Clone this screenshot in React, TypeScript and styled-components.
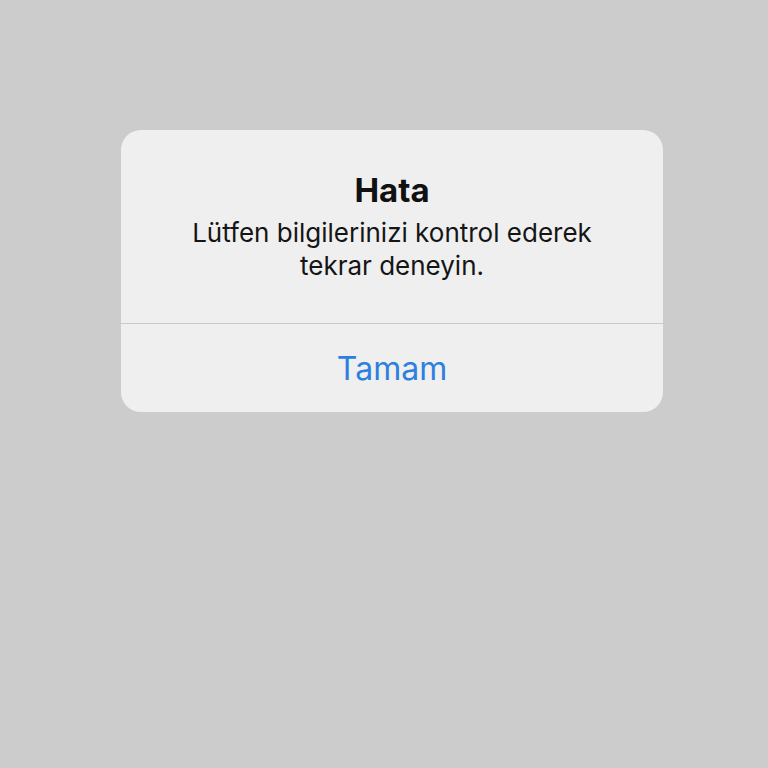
import React from "react";
import styled, { createGlobalStyle } from "styled-components";

const Global = createGlobalStyle`
  html, body {
    margin: 0;
    padding: 0;
    background: #cccccc;
  }
  body {
    font-family: Inter, "Noto Sans", "Liberation Sans", sans-serif;
    -webkit-font-smoothing: antialiased;
  }
`;

const Screen = styled.div`
  width: 768px;
  height: 768px;
  background: #cccccc;
  padding-top: 130px;
  padding-left: 121px;
  box-sizing: border-box;
`;

const Alert = styled.div`
  width: 542px;
  background: #efefef;
  border-radius: 20px;
  overflow: hidden;
  display: flex;
  flex-direction: column;
`;

const Body = styled.div`
  height: 193px;
  box-sizing: border-box;
  padding: 41px 30px 0;
  display: flex;
  flex-direction: column;
  align-items: center;
  text-align: center;
`;

const Title = styled.h1`
  margin: 0;
  font-size: 33px;
  line-height: 38px;
  font-weight: 700;
  color: #111111;
`;

const Message = styled.p`
  margin: 7px 0 0;
  font-size: 26px;
  line-height: 33px;
  font-weight: 400;
  color: #151515;
`;

const Divider = styled.div`
  height: 1px;
  background: #c9c9c9;
`;

const Action = styled.button`
  all: unset;
  height: 88px;
  display: flex;
  align-items: center;
  justify-content: center;
  font-family: Inter, "Noto Sans", "Liberation Sans", sans-serif;
  font-size: 32px;
  font-weight: 400;
  color: #2d7fe0;
  cursor: pointer;
`;

export default function App() {
  return (
    <>
      <Global />
      <Screen>
        <Alert role="alertdialog">
          <Body>
            <Title>Hata</Title>
            <Message>
              Lütfen bilgilerinizi kontrol ederek
              <br />
              tekrar deneyin.
            </Message>
          </Body>
          <Divider />
          <Action>Tamam</Action>
        </Alert>
      </Screen>
    </>
  );
}
